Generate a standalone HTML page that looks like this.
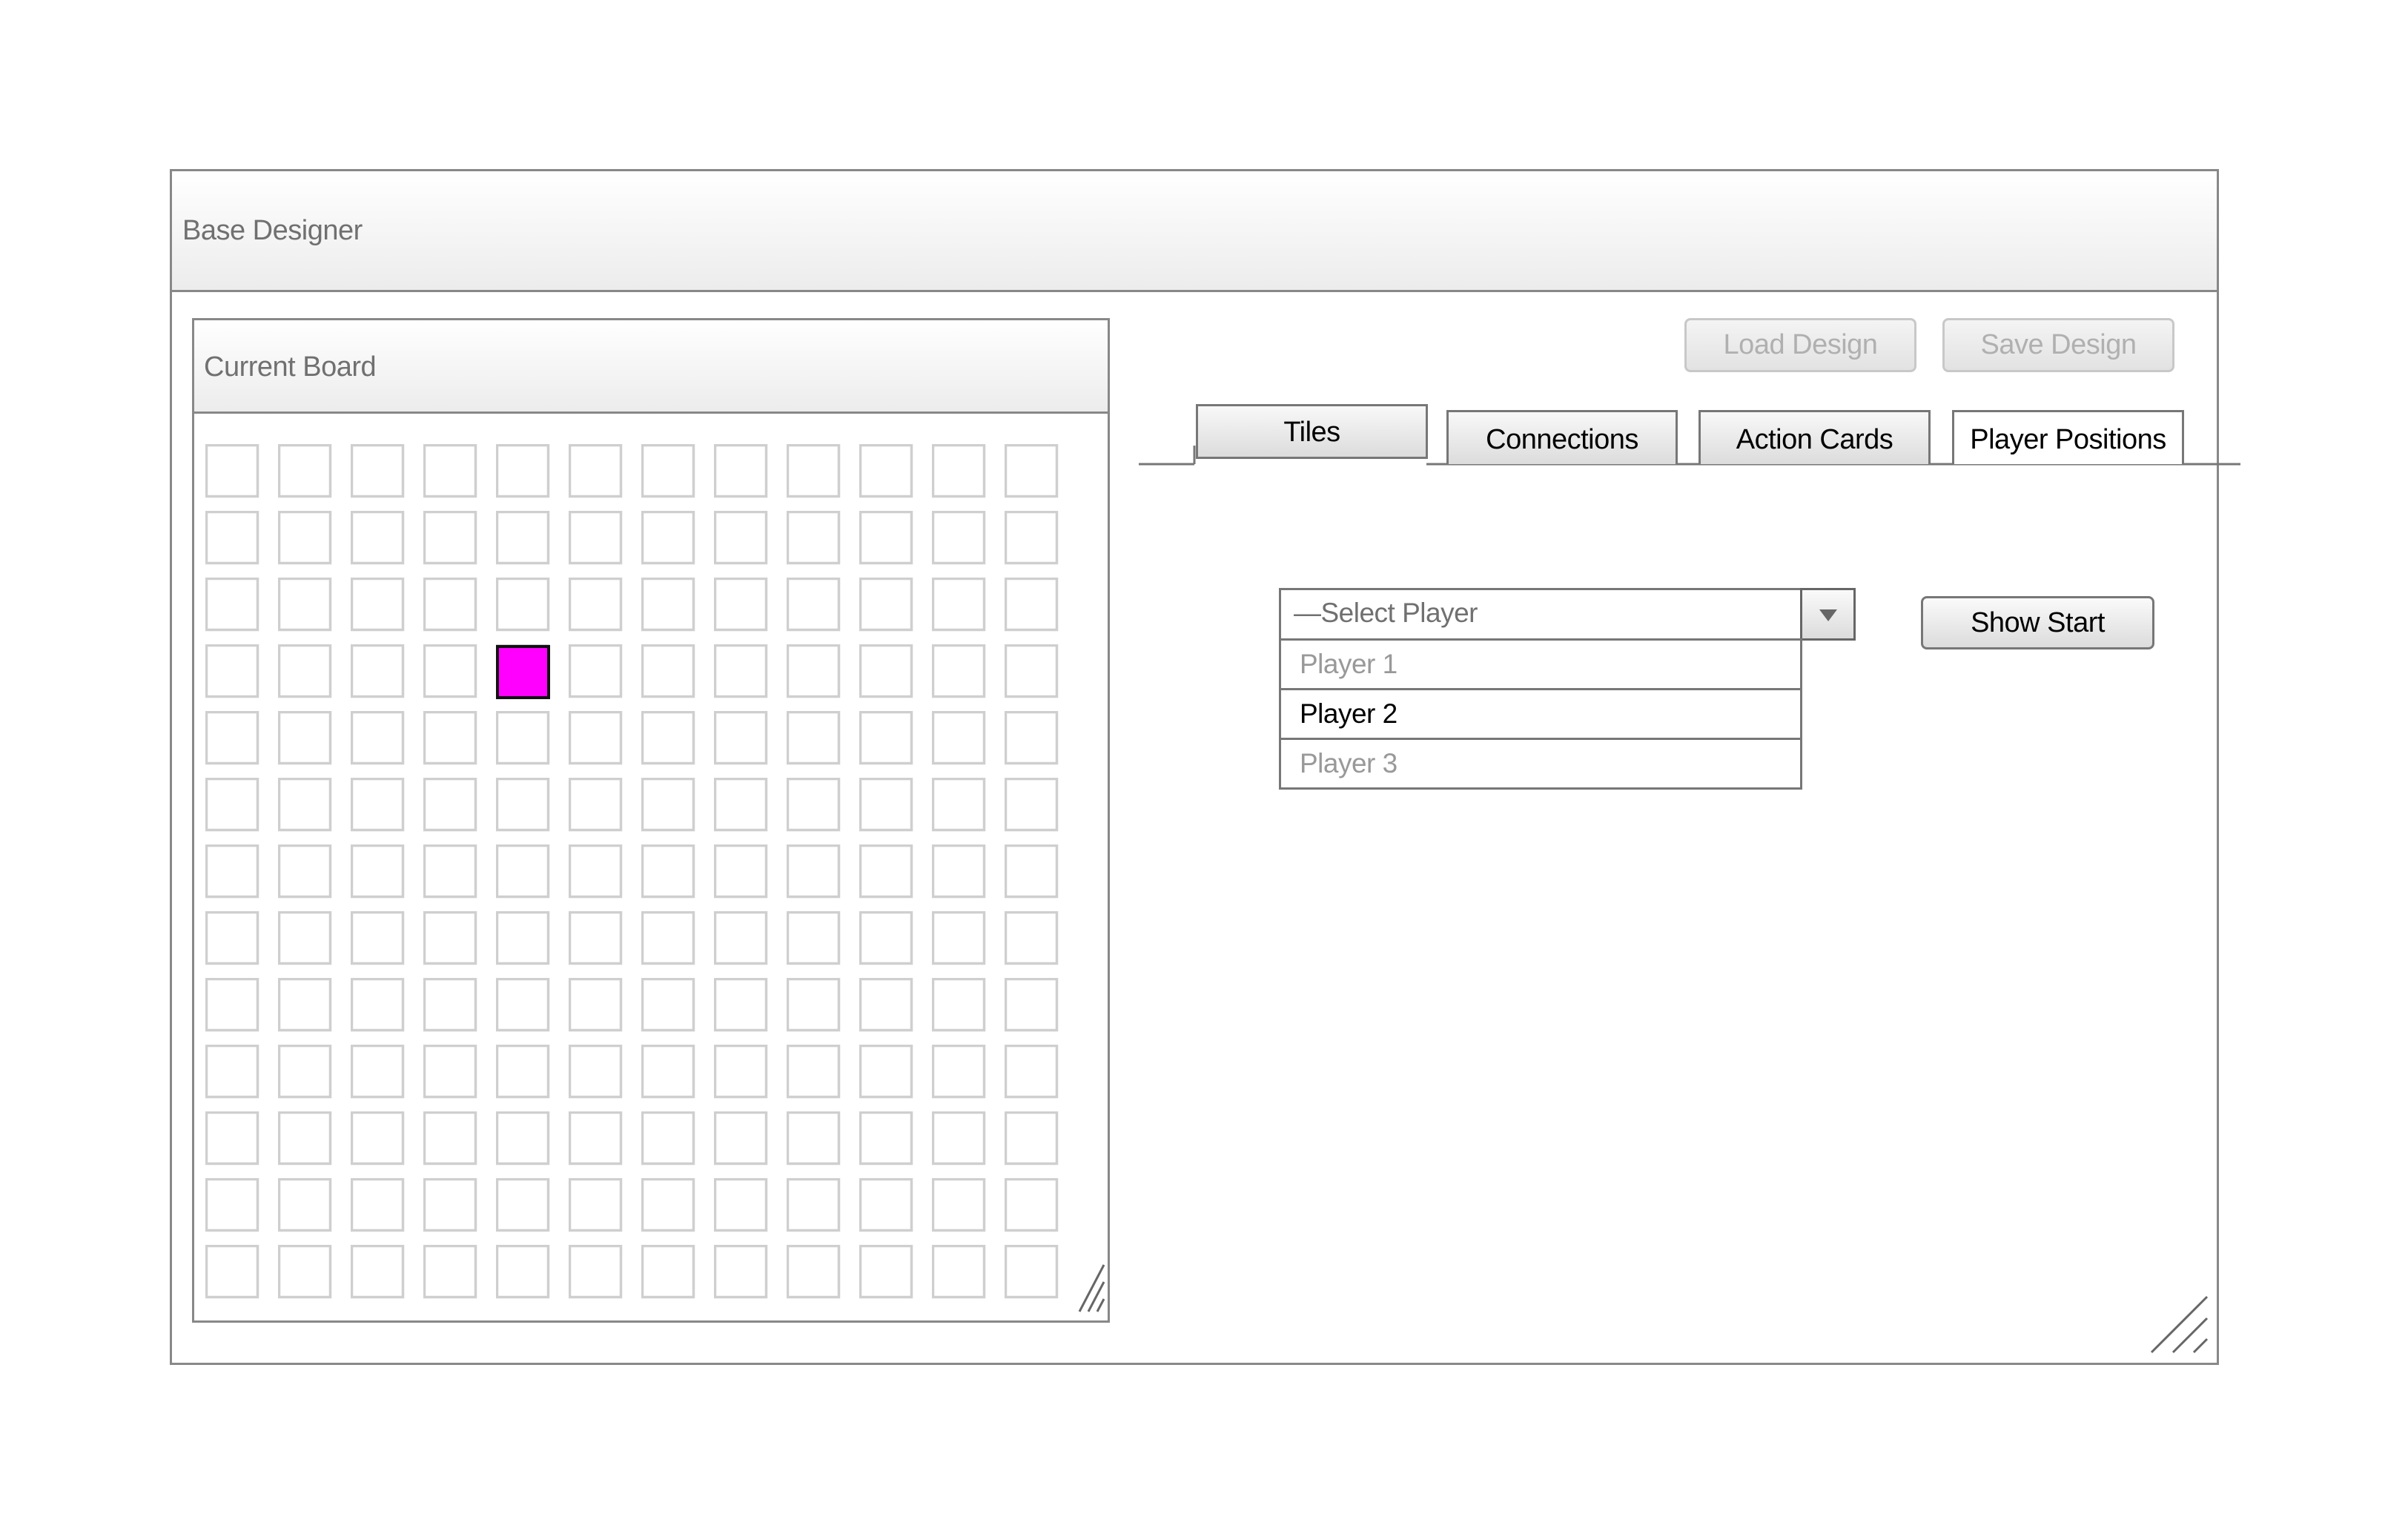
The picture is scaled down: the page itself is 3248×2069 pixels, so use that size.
<!DOCTYPE html>
<html><head><meta charset="utf-8"><style>
*{box-sizing:border-box;margin:0;padding:0}
body{width:3248px;height:2069px;background:#fff;position:relative;overflow:hidden;font-family:"Liberation Sans",Arial,sans-serif;letter-spacing:-0.5px}
.a{position:absolute}
.hdr{background:linear-gradient(#fff,#ececec)}
.btn{position:absolute;border:3px solid #777;border-radius:8px;background:linear-gradient(#fafafa,#dcdcdc);text-align:center;font-size:38px;color:#000}
.dis{border-color:#c8c8c8;color:#b0b0b0;background:linear-gradient(#f4f4f4,#e2e2e2)}
.tab{position:absolute;border:3px solid #777;border-bottom:none;background:linear-gradient(#f8f8f8,#dcdcdc);text-align:center;font-size:38px;color:#000}
.item{position:absolute;left:1725px;width:706px;border:3px solid #777;font-size:37px;padding-left:25px}
</style></head><body>
<div class="a" style="left:229px;top:228px;width:2764px;height:1613px;border:3px solid #888"></div>
<div class="a hdr" style="left:232px;top:231px;width:2758px;height:163px;border-bottom:3px solid #888"></div>
<div class="a" style="left:246px;top:290px;font-size:38px;color:#707070">Base Designer</div>

<div class="a" style="left:259px;top:429px;width:1238px;height:1355px;border:3px solid #888"></div>
<div class="a hdr" style="left:262px;top:432px;width:1232px;height:126px;border-bottom:3px solid #888"></div>
<div class="a" style="left:275px;top:474px;font-size:38px;color:#707070">Current Board</div>

<svg class="a" style="left:0;top:0" width="3248" height="2069">
<defs><pattern id="g" x="277" y="599" width="98" height="90" patternUnits="userSpaceOnUse">
<rect x="1.5" y="1.5" width="69" height="69" fill="none" stroke="#cfcfcf" stroke-width="3.5"/></pattern></defs>
<rect x="277" y="599" width="1176" height="1170" fill="url(#g)"/>
<rect x="671" y="872" width="69" height="69" fill="#ff00ff" stroke="#111" stroke-width="4"/>
<g stroke="#666" stroke-width="3">
<line x1="1456" y1="1769" x2="1489" y2="1706"/>
<line x1="1468" y1="1769" x2="1489" y2="1729"/>
<line x1="1480" y1="1769" x2="1489" y2="1752"/>
<line x1="2902" y1="1824" x2="2977" y2="1749"/>
<line x1="2931" y1="1824" x2="2977" y2="1778"/>
<line x1="2959" y1="1824" x2="2977" y2="1806"/>
</g>
<line x1="1536" y1="626" x2="1611" y2="626" stroke="#777" stroke-width="3"/>
<line x1="1611" y1="601" x2="1611" y2="626" stroke="#777" stroke-width="3"/>
<line x1="1924" y1="626" x2="3022" y2="626" stroke="#777" stroke-width="3"/>
</svg>

<div class="btn dis" style="left:2272px;top:429px;width:313px;height:73px;line-height:67px">Load Design</div>
<div class="btn dis" style="left:2620px;top:429px;width:313px;height:73px;line-height:67px">Save Design</div>

<div class="tab" style="left:1613px;top:545px;width:313px;height:74px;line-height:70px;border-bottom:3px solid #777">Tiles</div>
<div class="tab" style="left:1951px;top:553px;width:312px;height:73px;line-height:75px">Connections</div>
<div class="tab" style="left:2291px;top:553px;width:313px;height:73px;line-height:75px">Action Cards</div>
<div class="tab" style="left:2633px;top:553px;width:313px;height:73px;line-height:75px;background:#fff">Player Positions</div>

<div class="a" style="left:1725px;top:793px;width:778px;height:71px;border:3px solid #777"></div>
<div class="a" style="left:1745px;top:806px;font-size:37px;color:#707070">—Select Player</div>
<div class="a" style="left:2428px;top:793px;width:75px;height:71px;border:3px solid #666;background:linear-gradient(#fafafa,#dcdcdc)"></div>
<svg class="a" style="left:2454px;top:822px" width="24" height="18"><polygon points="0,0 24,0 12,16" fill="#666"/></svg>
<div class="item" style="top:861px;height:70px;line-height:64px;color:#999">Player 1</div>
<div class="item" style="top:928px;height:70px;line-height:64px;color:#000">Player 2</div>
<div class="item" style="top:995px;height:70px;line-height:64px;color:#999">Player 3</div>

<div class="btn" style="left:2591px;top:804px;width:315px;height:72px;line-height:66px">Show Start</div>
</body></html>
